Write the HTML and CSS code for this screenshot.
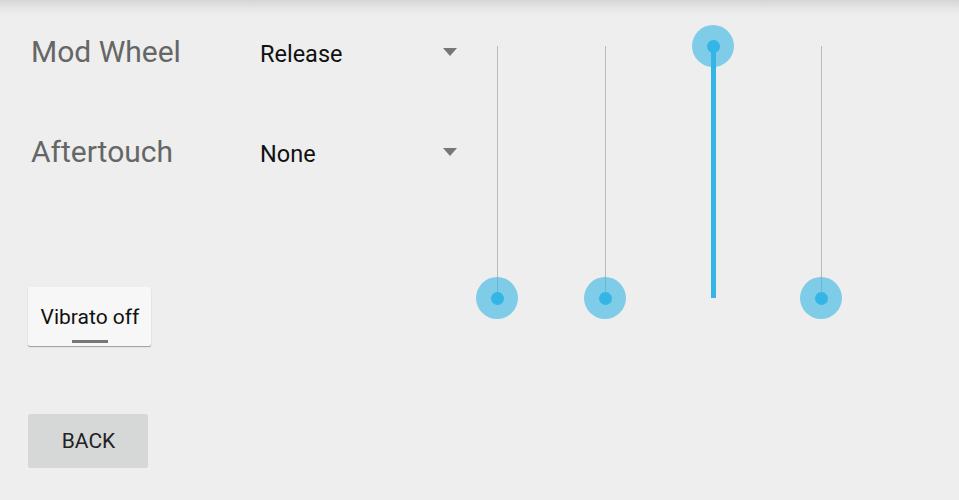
FILE: index.html
```html
<!DOCTYPE html>
<html>
<head>
<meta charset="utf-8">
<link rel="stylesheet" href="styles.css">
</head>
<body>
<div class="page">
  <div class="left">
    <div class="row">
      <div class="label">Mod Wheel</div>
      <div class="spinner"><span class="value">Release</span><span class="arrow"></span></div>
    </div>
    <div class="row row2">
      <div class="label">Aftertouch</div>
      <div class="spinner"><span class="value">None</span><span class="arrow"></span></div>
    </div>
    <div class="toggle">
      <span class="toggle-text">Vibrato off</span>
      <span class="indicator"></span>
    </div>
    <div class="back">BACK</div>
  </div>
  <div class="sliders">
    <div class="slider"><div class="track"></div><div class="thumb bottom"><span class="dot"></span></div></div>
    <div class="slider"><div class="track"></div><div class="thumb bottom"><span class="dot"></span></div></div>
    <div class="slider"><div class="track filled"></div><div class="thumb top"><span class="dot"></span></div></div>
    <div class="slider"><div class="track"></div><div class="thumb bottom"><span class="dot"></span></div></div>
  </div>
</div>
</body>
</html>
```

FILE: styles.css
```css
html, body {
  margin: 0;
  padding: 0;
}
body {
  width: 959px;
  height: 500px;
  overflow: hidden;
  background: #eeeeee;
  font-family: Roboto, "Noto Sans", sans-serif;
}
.page {
  display: flex;
  height: 500px;
  background-image: linear-gradient(to bottom, #d5d5d5 0px, #e6e6e6 8px, #eeeeee 16px);
  background-repeat: no-repeat;
  background-size: 100% 16px;
}
.left {
  width: 475px;
  display: flex;
  flex-direction: column;
  padding-top: 28px;
  box-sizing: border-box;
}
.row {
  display: grid;
  grid-template-columns: 229px 200px;
  padding-left: 31px;
  height: 48px;
}
.row2 {
  margin-top: 52px;
}
.label {
  font-size: 30px;
  line-height: 48px;
  color: #666666;
}
.spinner {
  display: flex;
  align-items: center;
  justify-content: space-between;
  height: 48px;
  padding-right: 3px;
}
.value {
  font-size: 23.5px;
  line-height: 48px;
  color: #111111;
  padding-top: 3px;
}
.arrow {
  width: 0;
  height: 0;
  border-left: 7px solid transparent;
  border-right: 7px solid transparent;
  border-top: 8px solid #777777;
  margin-top: 0;
}
.toggle {
  margin-top: 111px;
  margin-left: 28px;
  width: 123px;
  height: 59px;
  box-sizing: border-box;
  background: #f7f7f7;
  border-radius: 2px;
  box-shadow: 0 1px 1px rgba(0, 0, 0, 0.35);
  display: flex;
  flex-direction: column;
  align-items: center;
  padding-top: 18px;
  padding-left: 1px;
}
.toggle-text {
  font-size: 21px;
  line-height: 24px;
  color: #111111;
}
.indicator {
  margin-top: 11px;
  width: 36px;
  height: 3px;
  background: #777777;
}
.back {
  margin-top: 68px;
  margin-left: 28px;
  width: 120px;
  height: 54px;
  background: #d6d7d7;
  border-radius: 2px;
  font-size: 21px;
  line-height: 55px;
  text-align: center;
  color: #222222;
  padding-left: 1px;
  box-sizing: border-box;
}
.sliders {
  display: flex;
  gap: 66px;
  padding-top: 25px;
  padding-left: 1px;
}
.slider {
  position: relative;
  width: 42px;
  height: 294px;
}
.track {
  position: absolute;
  left: 21px;
  top: 21px;
  width: 1px;
  height: 252px;
  background: #bababa;
}
.track.filled {
  left: 19px;
  width: 5px;
  background: #33b5e5;
}
.thumb {
  position: absolute;
  left: 0;
  width: 42px;
  height: 42px;
  border-radius: 50%;
  background: rgba(51, 181, 229, 0.6);
  display: flex;
  align-items: center;
  justify-content: center;
}
.thumb.top { top: 0; }
.thumb.bottom { bottom: 0; }
.dot {
  width: 13px;
  height: 13px;
  border-radius: 50%;
  background: #33b5e5;
  margin-left: 1px;
}
```
